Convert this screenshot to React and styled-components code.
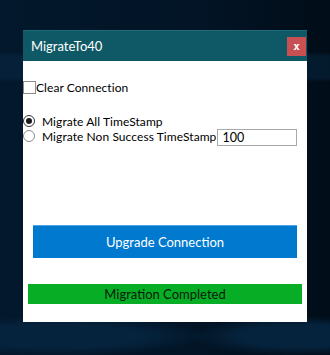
import React from "react";
import styled, { createGlobalStyle } from "styled-components";

const Global = createGlobalStyle`
  html, body { margin: 0; padding: 0; }
  body {
    width: 330px; height: 355px; overflow: hidden;
    font-family: "Segoe UI", "Lato", "Noto Sans", sans-serif;
  }
`;

const Desktop = styled.div`
  width: 330px;
  height: 355px;
  box-sizing: border-box;
  padding: 30px 0 0 23px;
  background:
    radial-gradient(ellipse 150px 20px at 60px 336px, #05233d 55%, transparent 100%),
    radial-gradient(ellipse 110px 20px at 300px 336px, #05233d 55%, transparent 100%),
    linear-gradient(180deg, transparent 0, transparent 52px, rgba(8,45,75,0.4) 56px, rgba(8,45,75,0.4) 78px, transparent 82px),
    linear-gradient(90deg, #03182c 0%, #021426 60%, #010d18 100%);
`;

const Window = styled.div`
  width: 284px;
  height: 292px;
  background: #ffffff;
  display: flex;
  flex-direction: column;
`;

const TitleBar = styled.div`
  height: 31px;
  box-sizing: border-box;
  background: #0f5966;
  border-top: 1px solid #1e6a76;
  display: flex;
  align-items: center;
  justify-content: space-between;
  padding: 0 1px 0 8px;
`;

const Title = styled.span`
  color: #ffffff;
  font-size: 13px;
  margin-top: -1px;
`;

const CloseButton = styled.div`
  width: 19px;
  height: 19px;
  background: #c84f52;
  color: #ffffff;
  font-family: "DejaVu Sans Mono", monospace;
  font-weight: bold;
  font-size: 11px;
  display: flex;
  align-items: center;
  justify-content: center;
  margin-top: 1px;
`;

const Body = styled.div`
  flex: 1;
  display: flex;
  flex-direction: column;
  padding-top: 20px;
`;

const CheckRow = styled.label`
  display: flex;
  align-items: center;
  font-size: 12px;
  letter-spacing: 0.07px;
  color: #000;
  height: 13px;
`;

const CheckBox = styled.span`
  width: 13px;
  height: 13px;
  box-sizing: border-box;
  border: 1px solid #8c8c8c;
  background: #fff;
  flex: none;
`;

const Radios = styled.div`
  margin-top: 21px;
  display: flex;
  flex-direction: column;
  gap: 3px;
`;

const RadioRow = styled.label`
  display: flex;
  align-items: center;
  font-size: 12px;
  letter-spacing: 0.07px;
  color: #000;
  height: 12px;
`;

const RadioCircle = styled.span`
  width: 12px;
  height: 12px;
  box-sizing: border-box;
  border: 1px solid ${(p) => (p.$checked ? "#333" : "#8c8c8c")};
  border-radius: 50%;
  background: #fff;
  flex: none;
  margin-right: 7px;
  display: flex;
  align-items: center;
  justify-content: center;
  &::after {
    content: "";
    width: 6px;
    height: 6px;
    border-radius: 50%;
    background: ${(p) => (p.$checked ? "#1a1a1a" : "transparent")};
  }
`;

const CountInput = styled.div`
  width: 80px;
  height: 17px;
  box-sizing: border-box;
  border: 1px solid #a9a9a9;
  font-size: 12.5px;
  padding-left: 4px;
  line-height: 16px;
  margin-left: 1px;
  margin-top: 3px;
`;

const UpgradeButton = styled.div`
  margin: 83px 10px 0 10px;
  height: 33px;
  box-sizing: border-box;
  background: #0079cf;
  border-top: 1px solid #4aa3e6;
  color: #ffffff;
  font-size: 13px;
  display: flex;
  align-items: center;
  justify-content: center;
`;

const StatusBar = styled.div`
  margin: 26px 5px 0 5px;
  height: 20px;
  background: #07ae25;
  color: #0b1a0b;
  font-size: 13px;
  display: flex;
  align-items: center;
  justify-content: center;
`;

export default function App() {
  return (
    <>
      <Global />
      <Desktop>
        <Window>
          <TitleBar>
            <Title>MigrateTo40</Title>
            <CloseButton>x</CloseButton>
          </TitleBar>
          <Body>
            <CheckRow>
              <CheckBox />
              Clear Connection
            </CheckRow>
            <Radios>
              <RadioRow>
                <RadioCircle $checked />
                Migrate All TimeStamp
              </RadioRow>
              <RadioRow>
                <RadioCircle />
                Migrate Non Success TimeStamp
                <CountInput>100</CountInput>
              </RadioRow>
            </Radios>
            <UpgradeButton>Upgrade Connection</UpgradeButton>
            <StatusBar>Migration Completed</StatusBar>
          </Body>
        </Window>
      </Desktop>
    </>
  );
}
